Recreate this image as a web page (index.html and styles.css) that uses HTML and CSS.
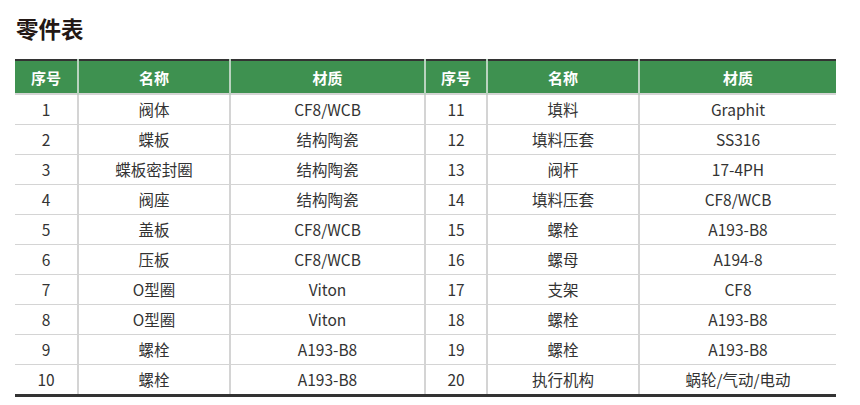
FILE: index.html
```html
<!DOCTYPE html>
<html lang="zh">
<head>
<meta charset="utf-8">
<link rel="stylesheet" href="styles.css">
</head>
<body>
<div class="page">
  <h1 class="title">零件表</h1>
  <table class="parts">
    <colgroup>
      <col class="c-no"><col class="c-name"><col class="c-mat">
      <col class="c-no2"><col class="c-name"><col class="c-mat2">
    </colgroup>
    <thead>
      <tr><th>序号</th><th>名称</th><th>材质</th><th>序号</th><th>名称</th><th>材质</th></tr>
    </thead>
    <tbody>
      <tr><td>1</td><td>阀体</td><td>CF8/WCB</td><td>11</td><td>填料</td><td>Graphit</td></tr>
      <tr><td>2</td><td>蝶板</td><td>结构陶瓷</td><td>12</td><td>填料压套</td><td>SS316</td></tr>
      <tr><td>3</td><td>蝶板密封圈</td><td>结构陶瓷</td><td>13</td><td>阀杆</td><td>17-4PH</td></tr>
      <tr><td>4</td><td>阀座</td><td>结构陶瓷</td><td>14</td><td>填料压套</td><td>CF8/WCB</td></tr>
      <tr><td>5</td><td>盖板</td><td>CF8/WCB</td><td>15</td><td>螺栓</td><td>A193-B8</td></tr>
      <tr><td>6</td><td>压板</td><td>CF8/WCB</td><td>16</td><td>螺母</td><td>A194-8</td></tr>
      <tr><td>7</td><td>O型圈</td><td>Viton</td><td>17</td><td>支架</td><td>CF8</td></tr>
      <tr><td>8</td><td>O型圈</td><td>Viton</td><td>18</td><td>螺栓</td><td>A193-B8</td></tr>
      <tr><td>9</td><td>螺栓</td><td>A193-B8</td><td>19</td><td>螺栓</td><td>A193-B8</td></tr>
      <tr><td>10</td><td>螺栓</td><td>A193-B8</td><td>20</td><td>执行机构</td><td>蜗轮/气动/电动</td></tr>
    </tbody>
  </table>
</div>
</body>
</html>
```

FILE: styles.css
```css
html, body {
  margin: 0;
  padding: 0;
  background: #ffffff;
}
body {
  font-family: "Noto Sans CJK SC", "Noto Sans", sans-serif;
  color: #333333;
}
.page {
  padding: 14px 0 0 15px;
  width: 821px;
}
.title {
  margin: 0;
  font-size: 22.5px;
  line-height: 28px;
  font-weight: 700;
  color: #231815;
  padding-left: 1px;
}
.parts {
  margin-top: 17px;
  width: 821px;
  border-collapse: collapse;
  table-layout: fixed;
  border-top: 2px solid #333333;
  border-bottom: 3px solid #333333;
}
.c-no { width: 63px; }
.c-name { width: 152px; }
.c-mat { width: 195px; }
.c-no2 { width: 62px; }
.c-mat2 { width: 197px; }
.parts th {
  background: #3e9150;
  color: #ffffff;
  font-weight: 700;
  font-size: 15px;
  height: 32px;
  padding: 0;
  text-align: center;
  border-left: 2px solid #b9d3bf;
}
.parts td {
  height: 27px;
  padding: 0 0 2px;
  font-size: 15.5px;
  text-align: center;
  border-top: 1px solid #d4d4d4;
  border-left: 2px solid #d4d4d4;
}
.parts th:first-child,
.parts td:first-child {
  border-left: none;
}
.parts tbody tr:first-child td {
  border-top: 2px solid #d4d4d4;
}
```
